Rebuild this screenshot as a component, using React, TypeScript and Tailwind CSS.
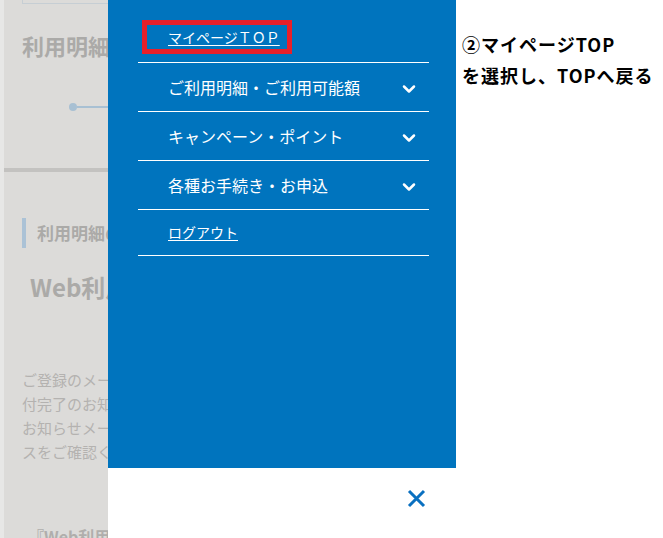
import { ChevronDown } from 'lucide-react';

const jp = { fontFamily: '"Noto Sans CJK JP", "Noto Sans", sans-serif' };

const menuItems = ['ご利用明細・ご利用可能額', 'キャンペーン・ポイント', '各種お手続き・お申込'];

function BackgroundPage() {
    return (
        <div className="flex h-[538px] w-[108px] overflow-hidden">
            <div className="w-[4px] shrink-0 bg-[#e7e7e6]" />
            <div className="w-[104px] shrink-0 overflow-hidden bg-[#dcdbd9] text-[#abaaa8]">
                {/* top input box edge */}
                <div className="ml-[18px] h-[4px] w-[200px] border-b border-l border-[#c6ced4]" />
                <h2 className="mt-[26px] ml-[18px] whitespace-nowrap text-[22px] font-bold leading-[30px]">利用明細</h2>

                {/* step line */}
                <div className="mt-[43px] flex h-[8px] items-center">
                    <div className="ml-[65px] h-2 w-2 shrink-0 rounded-full bg-[#a8c0d3]" />
                    <div className="h-[2px] flex-1 bg-[#a8c0d3]" />
                </div>

                <div className="mt-[57px] h-[4px] bg-[#c3c2c0]" />

                <div className="mt-[46px] ml-[18px] flex h-[30px] items-center whitespace-nowrap border-l-4 border-[#abc2d6] pl-[11px] text-[17px] font-bold">
                    利用明細の確認
                </div>

                <div className="mt-[23px] ml-[26px] whitespace-nowrap text-[24px] font-bold leading-[32px]">Web利用明細</div>

                <div className="mt-[65px] ml-[18px] whitespace-nowrap text-[15px] leading-[24px] text-[#b4b2b0]">
                    <p>ご登録のメールアドレスに</p>
                    <p>付完了のお知らせを送信</p>
                    <p>お知らせメールが届かない</p>
                    <p>スをご確認ください。</p>
                </div>

                <div className="mt-[60px] ml-[24px] whitespace-nowrap text-[16px] font-bold text-[#b0aeac]">『Web利用明細』</div>
            </div>
        </div>
    );
}

function Drawer() {
    return (
        <div className="flex w-[348px] shrink-0 flex-col">
            <div className="h-[468px] bg-[#0074be] pt-5 pr-[27px] pl-[30px] text-white">
                <div className="border-b border-white pb-2">
                    <div className="ml-[4px] flex h-[34px] w-[150px] items-center border-[5px] border-[#e8202a] pl-[21px]">
                        <a className="text-[14px] leading-none text-white underline underline-offset-2">マイページＴＯＰ</a>
                    </div>
                </div>

                {menuItems.map((item) => (
                    <div key={item} className="flex h-[49px] items-center justify-between border-b border-white pl-[30px] pr-[10px]">
                        <span className="text-[16px]">{item}</span>
                        <ChevronDown className="mt-[3px] h-5 w-5" strokeWidth={3} />
                    </div>
                ))}

                <div className="flex h-[46px] items-center border-b border-white pl-[30px]">
                    <a className="text-[14px] text-white underline underline-offset-2">ログアウト</a>
                </div>
            </div>

            <div className="flex h-[70px] justify-end bg-white pt-[21px] pr-[30px]">
                <svg width="19" height="19" viewBox="0 0 19 19" fill="none">
                    <path d="M2 2L17 17M17 2L2 17" stroke="#0a70c0" strokeWidth="3" />
                </svg>
            </div>
        </div>
    );
}

export default function App() {
    return (
        <div className="flex h-[538px] w-[663px] overflow-hidden bg-white" style={jp}>
            <BackgroundPage />
            <Drawer />
            <div className="flex-1 pt-[29px] pl-[6px] text-[18px] font-bold leading-[31px] tracking-[1px] whitespace-nowrap text-black">
                <p>②マイページTOP</p>
                <p>を選択し、TOPへ戻る</p>
            </div>
        </div>
    );
}
